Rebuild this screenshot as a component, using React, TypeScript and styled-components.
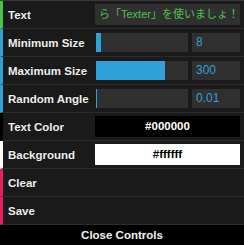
import React from 'react';
import styled, { createGlobalStyle } from 'styled-components';

const GREEN = '#4cc24c';
const BLUE = '#2fa1d6';
const PINK = '#e61d5f';

type NumberParam = { label: string; value: string; fill: number };

const numberParams: NumberParam[] = [
  { label: 'Minimum Size', value: '8', fill: 5 },
  { label: 'Maximum Size', value: '300', fill: 69 },
  { label: 'Random Angle', value: '0.01', fill: 1 },
];

export default function App() {
  return (
    <>
      <GlobalStyle />
      <S_Panel>
        <S_Row $accent={GREEN}>
          <S_Name>Text</S_Name>
          <S_TextField>ら「Texter」を使いましょ！</S_TextField>
        </S_Row>
        {numberParams.map((p) => (
          <S_Row key={p.label} $accent={BLUE}>
            <S_Name>{p.label}</S_Name>
            <S_SliderGroup>
              <S_Slider>
                <S_Fill style={{ width: p.fill }} />
              </S_Slider>
              <S_NumberField>{p.value}</S_NumberField>
            </S_SliderGroup>
          </S_Row>
        ))}
        <S_Row $accent='#000000'>
          <S_Name>Text Color</S_Name>
          <S_ColorField $bg='#000000' $fg='#ffffff'>
            #000000
          </S_ColorField>
        </S_Row>
        <S_Row $accent='#ffffff'>
          <S_Name>Background</S_Name>
          <S_ColorField $bg='#ffffff' $fg='#000000'>
            #ffffff
          </S_ColorField>
        </S_Row>
        <S_Row $accent={PINK}>
          <S_Name>Clear</S_Name>
        </S_Row>
        <S_Row $accent={PINK}>
          <S_Name>Save</S_Name>
        </S_Row>
        <S_Close>Close Controls</S_Close>
      </S_Panel>
    </>
  );
}

const GlobalStyle = createGlobalStyle`
  body {
    margin: 0;
    background: #1a1a1a;
    font-family: 'Liberation Sans', 'Noto Sans CJK JP', sans-serif;
  }
`;

const S_Panel = styled.div`
  width: 244px;
  border-top: 1px solid #3a3a3a;
  font-size: 11.5px;
  font-weight: 700;
`;

const S_Row = styled.div<{ $accent: string }>`
  display: flex;
  align-items: center;
  height: 27px;
  padding: 0 4px 0 5px;
  background: #1a1a1a;
  border-left: 3px solid ${(props) => props.$accent};
  border-bottom: 1px solid #2c2c2c;
`;

const S_Name = styled.span`
  width: 87px;
  flex-shrink: 0;
  color: #eeeeee;
  text-shadow: 0 -1px 0 #111;
  white-space: nowrap;
`;

const S_TextField = styled.div`
  flex: 1;
  height: 21px;
  line-height: 21px;
  padding: 0 4px;
  background: #303030;
  color: ${GREEN};
  font-weight: 400;
  font-size: 11px;
  white-space: nowrap;
  overflow: hidden;
`;

const S_SliderGroup = styled.div`
  flex: 1;
  display: flex;
  gap: 4px;
  padding-left: 1px;
`;

const S_Slider = styled.div`
  width: 92px;
  height: 19px;
  background: #303030;
`;

const S_Fill = styled.div`
  height: 100%;
  background: ${BLUE};
`;

const S_NumberField = styled.div`
  flex: 1;
  height: 19px;
  line-height: 19px;
  padding: 0 4px;
  background: #303030;
  color: ${BLUE};
  font-weight: 400;
  font-size: 12px;
`;

const S_ColorField = styled.div<{ $bg: string; $fg: string }>`
  flex: 1;
  height: 21px;
  line-height: 21px;
  text-align: center;
  background: ${(props) => props.$bg};
  color: ${(props) => props.$fg};
`;

const S_Close = styled.div`
  height: 20px;
  line-height: 20px;
  text-align: center;
  background: #000;
  color: #eeeeee;
  text-shadow: 0 -1px 0 #111;
`;
